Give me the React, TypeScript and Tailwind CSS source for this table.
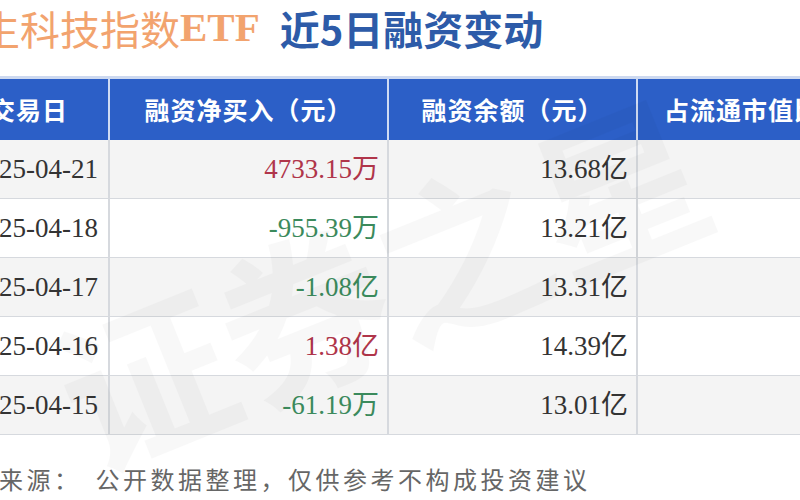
const rows = [
  { date: "2025-04-21", net: "4733.15万", up: true, bal: "13.68亿" },
  { date: "2025-04-18", net: "-955.39万", up: false, bal: "13.21亿" },
  { date: "2025-04-17", net: "-1.08亿", up: false, bal: "13.31亿" },
  { date: "2025-04-16", net: "1.38亿", up: true, bal: "14.39亿" },
  { date: "2025-04-15", net: "-61.19万", up: false, bal: "13.01亿" },
];

const cjk = "font-['Noto_Sans_CJK_SC','Noto_Sans',sans-serif]";
const num = "font-['Liberation_Serif','Noto_Sans_CJK_SC',serif]";

const App = () => {
  return (
    <div className={`relative w-[800px] h-[500px] overflow-hidden bg-white ${cjk}`}>
      {/* title */}
      <div className="ml-[-60px] flex h-[56px] items-center whitespace-nowrap">
        <span className="text-[40px] text-[#f2a36e]">恒生科技指数</span>
        <span className={`${num} text-[41px] font-bold text-[#f2a36e]`}>ETF</span>
        <span className="ml-[20px] text-[40px] font-semibold text-[#2d5ba8]">近5日融资变动</span>
      </div>

      {/* table */}
      <div className="mt-[20px] ml-[-50px] w-[896px] border-t-[3px] border-[#cdd9f0]">
        <div className="grid h-[61px] grid-cols-[160px_279px_249px_208px] bg-[#2c5fc7] text-[25px] font-bold tracking-[1px] text-white">
          <div className="flex items-center justify-center border-r-2 border-[#cfdbf3]">交易日</div>
          <div className="flex items-center justify-center border-r-2 border-[#cfdbf3]">融资净买入（元）</div>
          <div className="flex items-center justify-center border-r-2 border-[#cfdbf3]">融资余额（元）</div>
          <div className="flex items-center justify-center whitespace-nowrap">占流通市值比</div>
        </div>
        {rows.map((r, i) => (
          <div
            key={r.date}
            className={`grid h-[59px] grid-cols-[160px_279px_249px_208px] border-b border-[#d6d9de] ${num} text-[27px] text-[#333] ${i % 2 === 0 ? "bg-[#f4f4f4]" : "bg-white"}`}
          >
            <div className="flex items-center justify-end border-r-2 border-[#d6d9de] pr-[10px]">{r.date}</div>
            <div className={`flex items-center justify-end border-r-2 border-[#d6d9de] pr-[8px] ${r.up ? "text-[#b0354a]" : "text-[#3b8a5c]"}`}>
              {r.net}
            </div>
            <div className="flex items-center justify-end border-r-2 border-[#d6d9de] pr-[8px]">{r.bal}</div>
            <div />
          </div>
        ))}
      </div>

      {/* footer */}
      <div className="mt-[30px] ml-[-56px] whitespace-nowrap text-[24px] leading-[28px] tracking-[3.5px] text-[#666]">
        数据来源：<span className="ml-[14px]">公开数据整理，仅供参考不构成投资建议</span>
      </div>

      {/* watermark */}
      <div className="pointer-events-none absolute left-[40px] top-[150px] rotate-[-22deg] whitespace-nowrap text-[170px] font-bold text-black opacity-[0.022]">
        证券之星
      </div>
    </div>
  );
};

export default App;
